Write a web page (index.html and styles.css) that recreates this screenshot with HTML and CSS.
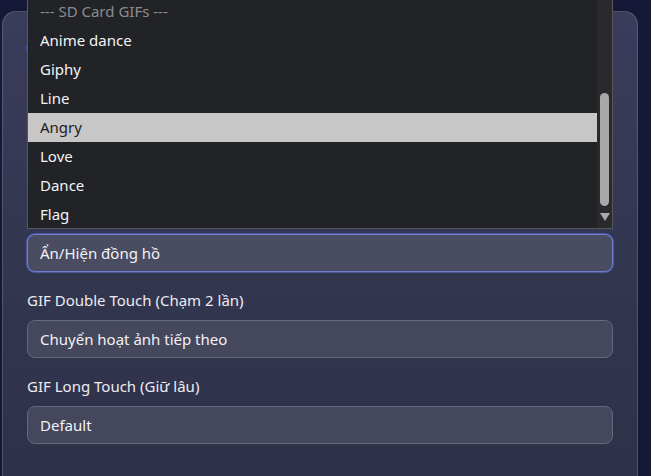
FILE: index.html
```html
<!DOCTYPE html>
<html lang="vi">
<head>
<meta charset="utf-8">
<title>GIF Touch Settings</title>
<link rel="stylesheet" href="styles.css">
</head>
<body>
<div class="card">
  <h3 class="card-title">Cảm ứng</h3>
  <div class="select select-focus">Ẩn/Hiện đồng hồ</div>
  <div class="field">
    <label class="field-label">GIF Double Touch (Chạm 2 lần)</label>
    <div class="select">Chuyển hoạt ảnh tiếp theo</div>
  </div>
  <div class="field">
    <label class="field-label">GIF Long Touch (Giữ lâu)</label>
    <div class="select">Default</div>
  </div>
</div>

<div class="popup">
  <ul class="options">
    <li class="opt opt-group">--- SD Card GIFs ---</li>
    <li class="opt">Anime dance</li>
    <li class="opt">Giphy</li>
    <li class="opt">Line</li>
    <li class="opt opt-active">Angry</li>
    <li class="opt">Love</li>
    <li class="opt">Dance</li>
    <li class="opt">Flag</li>
  </ul>
  <div class="scrollbar">
    <div class="thumb-space"><div class="thumb"></div></div>
    <div class="arrow-down"></div>
  </div>
</div>
</body>
</html>
```
FILE: styles.css
```css
* { box-sizing: border-box; }
html, body { height: 100%; }
body {
  margin: 0;
  background: #151937;
  font-family: "Noto Sans", "Open Sans", sans-serif;
  font-size: 15px;
  color: #e9e9f0;
  overflow: hidden;
  position: relative;
}
.card {
  margin: 11px 0 0 2px;
  width: 636px;
  height: 520px;
  border: 1px solid rgba(255,255,255,0.16);
  border-radius: 14px;
  background: linear-gradient(180deg, #3a3c5c 0%, #33364f 50%, #2d3047 100%);
  padding: 24px 24px;
  display: flex;
  flex-direction: column;
  gap: 18px;
}
.card-title {
  margin: 0 0 156px -1px;
  font-size: 16px;
  line-height: 24px;
  font-weight: 600;
  color: #f0f0f6;
}
.field { display: flex; flex-direction: column; gap: 10px; }
.field-label {
  font-size: 15px;
  line-height: 20px;
  color: #ececf2;
}
.select {
  height: 38px;
  border: 1px solid #66687e;
  border-radius: 8px;
  background: #45475d;
  padding: 0 12px;
  display: flex;
  align-items: center;
  color: #f2f2f6;
}
.select-focus {
  border-color: #6d7dd8;
  box-shadow: 0 0 0 1px rgba(100,118,220,0.55);
  background: #4a4c61;
}
.popup {
  position: absolute;
  left: 27px;
  top: 0;
  width: 586px;
  height: 229px;
  background: #212327;
  border: 1px solid #55575c;
  border-top: none;
  display: flex;
  overflow: hidden;
}
.options {
  list-style: none;
  margin: -3px 0 0;
  padding: 0;
  flex: 1;
}
.opt {
  height: 29px;
  line-height: 29px;
  padding-left: 12px;
  color: #f4f4f4;
  white-space: nowrap;
}
.opt-group { color: #8c8c8e; }
.opt-active { background: #c7c7c7; color: #1e1e1e; }
.scrollbar {
  width: 15px;
  background: #2a2a2c;
  display: flex;
  flex-direction: column;
  align-items: center;
  padding: 93px 0 5px;
}
.thumb-space { flex: 1; width: 100%; display: flex; justify-content: center; }
.thumb {
  width: 9px;
  height: 113px;
  border-radius: 5px;
  background: #a8a8a8;
}
.arrow-down {
  width: 0;
  height: 0;
  border-left: 5px solid transparent;
  border-right: 5px solid transparent;
  border-top: 8px solid #a8a8a8;
  margin-bottom: 2px;
}
```
